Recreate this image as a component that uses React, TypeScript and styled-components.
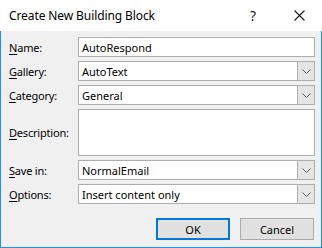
import React from "react";
import styled, { createGlobalStyle } from "styled-components";

const GlobalStyle = createGlobalStyle`
  html, body {
    margin: 0;
    padding: 0;
    background: #ffffff;
  }
  body {
    font-family: "Noto Sans", "Open Sans", sans-serif;
    font-size: 12px;
    color: #000000;
  }
`;

type Field = {
  label: string;
  value: string;
  kind: "text" | "select" | "area";
};

const fields: Field[] = [
  { label: "Name:", value: "AutoRespond", kind: "text" },
  { label: "Gallery:", value: "AutoText", kind: "select" },
  { label: "Category:", value: "General", kind: "select" },
  { label: "Description:", value: "", kind: "area" },
  { label: "Save in:", value: "NormalEmail", kind: "select" },
  { label: "Options:", value: "Insert content only", kind: "select" },
];

const Chevron = () => (
  <svg width="9" height="5" viewBox="0 0 9 5">
    <path d="M0.5 0.5 L4.5 4.5 L8.5 0.5" fill="none" stroke="#5a5a5a" strokeWidth="1" />
  </svg>
);

const CloseIcon = () => (
  <svg width="11" height="11" viewBox="0 0 11 11">
    <path d="M0.5 0.5 L10.5 10.5 M10.5 0.5 L0.5 10.5" stroke="#1a1a1a" strokeWidth="1.1" />
  </svg>
);

const App = () => {
  return (
    <>
      <GlobalStyle />
      <Window>
        <TitleBar>
          <Title>Create New Building Block</Title>
          <TitleButton>?</TitleButton>
          <TitleButton>
            <CloseIcon />
          </TitleButton>
        </TitleBar>
        <Body>
          <Form>
            {fields.map((f) => (
              <React.Fragment key={f.label}>
                <Label>
                  <u>{f.label.slice(0, 1)}</u>
                  {f.label.slice(1)}
                </Label>
                {f.kind === "select" ? (
                  <Select>
                    <FieldText>{f.value}</FieldText>
                    <Arrow>
                      <Chevron />
                    </Arrow>
                  </Select>
                ) : (
                  <TextBox $tall={f.kind === "area"}>
                    <FieldText>{f.value}</FieldText>
                  </TextBox>
                )}
              </React.Fragment>
            ))}
          </Form>
          <Buttons>
            <Button $primary>OK</Button>
            <Button>Cancel</Button>
          </Buttons>
        </Body>
      </Window>
    </>
  );
};

export default App;

const Window = styled.div`
  width: 322px;
  height: 248px;
  display: flex;
  flex-direction: column;
  box-sizing: border-box;
`;

const TitleBar = styled.div`
  height: 31px;
  flex: none;
  display: flex;
  align-items: center;
  background: #ffffff;
  padding-left: 9px;
  box-sizing: border-box;
`;

const Title = styled.div`
  flex: 1;
  font-size: 12px;
  color: #000000;
  letter-spacing: -0.1px;
`;

const TitleButton = styled.div`
  width: 46px;
  height: 31px;
  display: flex;
  align-items: center;
  justify-content: center;
  font-size: 14px;
  color: #1a1a1a;
`;

const Body = styled.div`
  flex: 1;
  background: #f0f0f0;
  border: 1px solid #1f8fff;
  border-top: none;
  padding: 6px 6px 0 8px;
  display: flex;
  flex-direction: column;
`;

const Form = styled.div`
  display: grid;
  grid-template-columns: 69px 1fr;
  row-gap: 4px;
`;

const Label = styled.div`
  display: flex;
  align-items: center;
  font-size: 11px;
  letter-spacing: -0.2px;
  color: #000000;
  white-space: nowrap;
  u {
    text-underline-offset: 2px;
  }
`;

const TextBox = styled.div<{ $tall?: boolean }>`
  height: ${({ $tall }) => ($tall ? "47px" : "20px")};
  box-sizing: border-box;
  border: 1px solid #adadad;
  background: #ffffff;
  display: flex;
  align-items: center;
`;

const Select = styled.div`
  height: 20px;
  box-sizing: border-box;
  border: 1px solid #adadad;
  background: #ffffff;
  display: flex;
  align-items: center;
`;

const FieldText = styled.div`
  flex: 1;
  padding-left: 3px;
  font-size: 11px;
  color: #000000;
  white-space: nowrap;
`;

const Arrow = styled.div`
  width: 17px;
  align-self: stretch;
  box-sizing: border-box;
  border-left: 1px solid #adadad;
  background: #e5e5e5;
  display: flex;
  align-items: center;
  justify-content: center;
`;

const Buttons = styled.div`
  display: flex;
  justify-content: flex-end;
  gap: 10px;
  margin-top: 14px;
  padding-right: 1px;
`;

const Button = styled.div<{ $primary?: boolean }>`
  width: 74px;
  height: 22px;
  box-sizing: border-box;
  border: ${({ $primary }) => ($primary ? "2px solid #0078d7" : "1px solid #adadad")};
  background: #e1e1e1;
  display: flex;
  align-items: center;
  justify-content: center;
  font-size: 11px;
  color: #000000;
`;
